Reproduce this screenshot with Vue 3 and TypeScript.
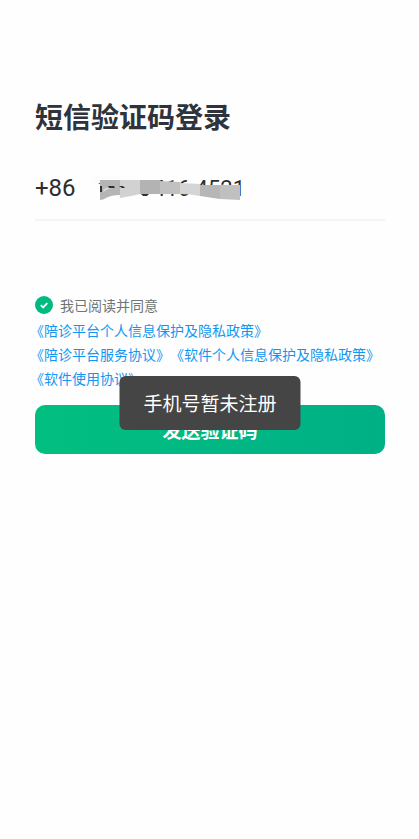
<script setup lang="ts">
import { ref } from 'vue'

const phone = ref('1        416 4521')
const agreed = ref(true)
const toast = ref('手机号暂未注册')
const agreements: string[] = [
  '《陪诊平台个人信息保护及隐私政策》',
  '《陪诊平台服务协议》',
  '《软件个人信息保护及隐私政策》',
  '《软件使用协议》',
]
</script>

<template>
  <main class="login">
    <h1 class="title">短信验证码登录</h1>
    <form class="form" @submit.prevent>
      <div class="phone-row">
        <label class="prefix" for="phone">+86</label>
        <div class="field">
          <input id="phone" v-model="phone" class="phone" type="tel" />
          <svg class="mask" viewBox="0 0 150 24" aria-hidden="true">
            <path fill="#fcfcfc" d="M0 0h46v6H0z" />
            <path fill="#b5b5b5" d="M7 3h20v15q-9 0-14 3-3 2-6 2z" />
            <path fill="#d2d2d2" d="M27 3h20v14q-8 2-20 4z" />
            <path fill="#b3b3b3" d="M47 3h20v14H47z" />
            <path fill="#c1c1c1" d="M67 4l20 1v12H67z" />
            <path fill="#d5d5d5" d="M87 6l20 1v12q-9-2-20-2z" />
            <path fill="#b6b6b6" d="M107 8h20v14l-20-3z" />
            <path fill="#c0c0c0" d="M127 8h20v15l-20-1z" />
            <path fill="#d9d9d9" d="M11 12q5-3 13-2l-9 2-5 3z" />
            <path fill="#303030" d="M7 9h2v6H7zM15 9h6l1 2h-6zM26 9l4 0 2 2h-3z" />
            <path fill="#303030" d="M48 17h8l-2 2h-4z" />
          </svg>
        </div>
      </div>
      <label class="agree">
        <input v-model="agreed" class="check-input" type="checkbox" />
        <svg class="check" viewBox="0 0 18 18" aria-hidden="true">
          <circle cx="9" cy="9" r="9" fill="#02b980" />
          <path d="M5.8 9.2l2.3 2.2 4.2-4.2" fill="none" stroke="#fff" stroke-width="1.8" />
        </svg>
        <span>我已阅读并同意</span>
      </label>
      <p class="links"><a v-for="item in agreements" :key="item" href="#">{{ item }}</a></p>
      <div class="action">
        <button class="submit" type="submit">发送验证码</button>
        <div class="toast" role="status">{{ toast }}</div>
      </div>
    </form>
  </main>
</template>

<style>
body {
  margin: 0;
  background: #fefefe;
}
</style>

<style scoped>
.login {
  padding: 95px 34px 40px 35px;
  font-family: "Noto Sans CJK SC", sans-serif;
}
.title {
  margin: 0;
  font-size: 28px;
  line-height: 42px;
  font-weight: 700;
  color: #2f343c;
}
.phone-row {
  display: flex;
  align-items: center;
  height: 62px;
  margin-top: 20px;
  border-bottom: 2px solid #f5f5f5;
  font-family: Roboto, sans-serif;
  font-size: 24px;
  color: #2d2d2d;
}
.prefix {
  width: 58px;
  -webkit-text-stroke: 0;
}
.field {
  position: relative;
  flex: 1;
  font-size: 22px;
}
.phone {
  display: block;
  box-sizing: border-box;
  width: 100%;
  height: 26px;
  padding: 0 0 0 4px;
  border: 0;
  outline: 0;
  background: transparent;
  font: inherit;
  color: inherit;
}
.mask {
  position: absolute;
  top: 2px;
  left: 0;
  width: 150px;
  height: 24px;
}
.agree {
  position: relative;
  display: flex;
  align-items: center;
  gap: 7px;
  height: 24px;
  margin-top: 72px;
  font-size: 14px;
  line-height: 20px;
  color: #707573;
}
.check-input {
  position: absolute;
  width: 18px;
  height: 18px;
  margin: 0;
  opacity: 0;
}
.check {
  width: 18px;
  height: 18px;
}
.links {
  display: flex;
  flex-wrap: wrap;
  margin: 1px -5px 0;
  font-size: 14px;
  line-height: 24px;
  text-spacing-trim: space-all;
}
.links a {
  color: #1296f0;
  text-decoration: none;
}
.action {
  position: relative;
  margin-top: 15px;
}
.submit {
  display: block;
  width: 100%;
  height: 49px;
  padding: 0;
  border: 0;
  border-radius: 10px;
  background: linear-gradient(90deg, #02bf80, #00b086);
  font: 700 19px "Noto Sans CJK SC", sans-serif;
  color: #fff;
}
.toast {
  position: absolute;
  bottom: 24px;
  left: 50%;
  transform: translateX(-50%);
  box-sizing: border-box;
  padding: 13px 24px;
  border-radius: 6px;
  background: #454545;
  font-size: 19px;
  line-height: 28px;
  white-space: nowrap;
  color: #fff;
}
</style>
